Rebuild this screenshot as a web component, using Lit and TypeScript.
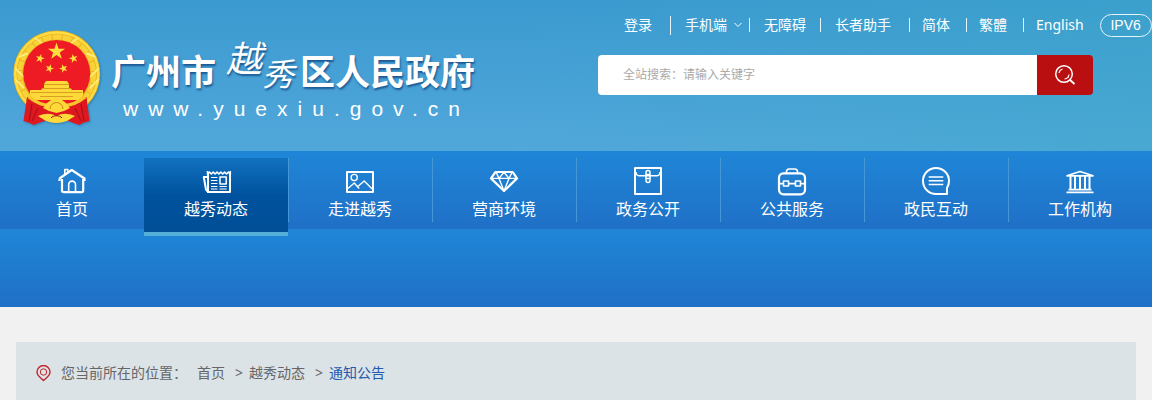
import { LitElement, html, css, svg } from "lit";
import { customElement, state } from "lit/decorators.js";
import { classMap } from "lit/directives/class-map.js";

const icons: Record<string, unknown> = {
  home: svg`<path d="M3.5 13.5 15.7 5 28.5 13.5V16M3.5 13.5V16M6 14V25.5a1.6 1.6 0 0 0 1.6 1.6H25.6a1.6 1.6 0 0 0 1.6-1.6V14" stroke-width="2.2"/><path d="M8.8 9.5V4.5h3v3" stroke-width="1.6"/><path d="M12.7 27V19.5a3.4 3.4 0 0 1 6.8 0V27" stroke-width="1.6"/>`,
  news: svg`<path d="M8 27V7.5M30 7.5V27H7" stroke-width="2"/><path d="M7.5 6v3l1.9-2 1.9 2 1.9-2 1.9 2 1.9-2 1.9 2 1.9-2 1.9 2 1.9-2 1.9 2 1.9-2 1.9 2V6" stroke-width="1.6"/><path d="M7.5 12H3.8l2.2 12.5 1.5 2" stroke-width="2"/><path d="M11 12.5h6.4M11 15.5h6.4M11 18.5h6.4M11 21.5h6.4M11 24h6.4M19.5 21.5h7.2M19.5 24h7.2" stroke-width="1.2"/><path d="M20 12h6.2v7H20z" stroke-width="1.5"/>`,
  picture: svg`<path d="M3 7h26v20H3z" stroke-width="2"/><circle cx="10.2" cy="12.5" r="3.1" stroke-width="1.4"/><path d="M4 23.5 10.2 18l5 5.5M13.2 22l7-6 8 8" stroke-width="1.4"/>`,
  diamond: svg`<path d="M7.5 7h17.2l4.3 6.4L16 26 3 13.4z" stroke-width="2.2"/><path d="M3 13.4h26M8 7l3 6.4L16 26l5-12.6L24.3 7M11 13.4 16 7.2l5 6.2" stroke-width="1.4"/>`,
  archive: svg`<path d="M3 3h26v26H3z" stroke-width="2"/><path d="M4 7c0 2.4 1 3.7 3 3.7h18c2 0 3-1.3 3-3.7" stroke-width="1.4"/><rect x="14" y="5.5" width="4" height="12" rx="2" stroke-width="1.5"/><path d="M14 9.5h4M14 13.5h4" stroke-width="1.5"/>`,
  bag: svg`<rect x="3" y="8.3" width="26" height="21" rx="4.5" stroke-width="2.2"/><path d="M10.5 8V6.5A2.6 2.6 0 0 1 13 4h6a2.6 2.6 0 0 1 2.5 2.5V8" stroke-width="1.6"/><path d="M3 18.6h4.5M12.5 18.6h7M24.5 18.6H29M7.5 16h5v5h-5zM19.5 16h5v5h-5z" stroke-width="1.6"/>`,
  chat: svg`<path d="M27 22.9V29H16A13 13 0 1 1 29 16c0 2.8-.7 5-2 6.9z" stroke-width="2"/><path d="M8.7 12h14.6M8.7 15.8h14.6M8.7 19.5h14.6" stroke-width="1.4"/>`,
  hall: svg`<path d="M3 10.8h26L16 6.5z" stroke-width="1.7"/><path d="M6.5 11v13.5M11 11v13.5M16 11v13.5M21 11v13.5M25.5 11v13.5" stroke-width="2"/><path d="M4.5 24.6h23M2.5 27.4h27" stroke-width="1.7"/>`,
};

const navItems = [
  { icon: "home", label: "首页" },
  { icon: "news", label: "越秀动态" },
  { icon: "picture", label: "走进越秀" },
  { icon: "diamond", label: "营商环境" },
  { icon: "archive", label: "政务公开" },
  { icon: "bag", label: "公共服务" },
  { icon: "chat", label: "政民互动" },
  { icon: "hall", label: "工作机构" },
];

const star = (cx: number, cy: number, r: number, turn = 0) => {
  const points = Array.from({ length: 10 }, (_, i) => {
    const a = ((-90 + turn + i * 36) * Math.PI) / 180;
    const d = i % 2 ? r * 0.39 : r;
    return `${(cx + d * Math.cos(a)).toFixed(2)},${(cy + d * Math.sin(a)).toFixed(2)}`;
  });
  return svg`<polygon points=${points.join(" ")} fill="#ffdf3d"/>`;
};

@customElement("site-emblem")
export class SiteEmblem extends LitElement {
  static styles = css`
    :host { display: block; flex: none; }
    svg { display: block; filter: drop-shadow(1px 1px 1px rgba(10, 60, 110, 0.35)); }
  `;
  render() {
    return html`<svg width="88" height="96" viewBox="0 0 88 96" aria-hidden="true">
      <ellipse cx="43.7" cy="44" rx="43.5" ry="43.5" fill="#e6b422"/>
      <circle cx="43.7" cy="44" r="41.5" fill="none" stroke="#ffdc42" stroke-width="2.5"/>
      <circle cx="43.7" cy="44" r="37" fill="none" stroke="#f9d238" stroke-width="5" stroke-dasharray="9 1"/>
      <path d="M2 38 12 48M2 49l9 9M86 38l-10 10M86 49l-9 9M22 8l7 5M65 8l-7 5M6 27l9-4M82 27l-9-4" stroke="#fff08a" stroke-width="1.5"/>
      <ellipse cx="43.7" cy="43.5" rx="33.5" ry="33.5" fill="#ee1b24"/>
      ${star(43.5, 21.5, 9)}${star(27, 28.5, 4.7, 15)}${star(60.5, 28.5, 4.7, -15)}${star(36.5, 38.5, 4.5, 20)}${star(50.5, 38.5, 4.5, -20)}
      <path d="M33 51h21l2 3v4h2l1 3H28l1-3h2v-4z" fill="#ffd83a"/>
      <path d="M17 60h53v5l-3 5H20l-3-5z" fill="#ffd83a"/>
      <path d="M31 54.5h25M29 58.5h29M18 62.5h51M27 66.5h33" stroke="#c8871a" stroke-width=".7"/>
      <path d="M14 67c10 6 19 8 29.5 6 10.5 2 20 0 30-6l3 24-7 2-3 2-6-2-5-2-12-2-12 2-6 2-5 2-4-2-6-2z" fill="#df1820"/>
      <path d="M16 67c10 8 18 10 27.5 7.5C53 77 62 75 72 67" fill="none" stroke="#f7c62d" stroke-width="3.5"/>
      <path d="M30 78c2-2 4-6 7-7l2-3 2 2 2.500-3 2.500 3 2-2 2 3c3 1 5 5 7 7l-6 3-7.500 2L36 81z" fill="#ffd83a"/>
      <path d="M37 79a6.5 6.5 0 0 1 13 0" fill="none" stroke="#c8871a" stroke-width="1"/>
      <path d="M25 86c8-3 12-3 18.5 0 6.5-3 10.5-3 18.5 0-5 3-9 7-18.5 7S30 89 25 86z" fill="#ffd83a"/>
      <path d="M38 88c2-3 9-3 11 0M19 74l-3 17M25 78l-6 13M68 74l3 17M62 78l6 13" fill="none" stroke="#9e1018" stroke-width="1"/>
    </svg>`;
  }
}

@customElement("app-root")
export class AppRoot extends LitElement {
  @state() private active = 1;

  static styles = css`
    :host {
      display: flex;
      flex-direction: column;
      min-height: 100vh;
      background: #f1f1f1;
      font: 14px/20px "Noto Sans", "Noto Sans CJK SC", sans-serif;
      color: #666;
    }
    * { box-sizing: border-box; }
    a { color: inherit; text-decoration: none; }

    .header {
      display: flex;
      justify-content: space-between;
      min-height: 151px;
      color: #fff;
      background:
        linear-gradient(100deg, transparent 45%, rgba(58, 172, 196, 0.35)),
        linear-gradient(#3b9ad0, #51a7da);
    }
    .logo { display: flex; gap: 10px; padding: 30px 0 0 13px; }
    .wordmark { display: flex; flex-direction: column; padding-top: 10px; }
    .name {
      display: flex;
      height: 58px;
      margin: 0;
      font: bold 35px/60px "Noto Sans CJK SC", sans-serif;
      text-shadow: 1px 2px 2px rgba(10, 60, 120, 0.7);
    }
    .brush { display: flex; padding: 0 6px 0 10px; font-weight: 400; font-style: italic; }
    .brush-first { font-size: 36px; line-height: 32px; }
    .brush-last { font-size: 32px; line-height: 64px; }
    .address {
      padding-left: 12px;
      font: 21px/22px "Liberation Sans", sans-serif;
      letter-spacing: 10px;
    }

    .tools { width: 554px; padding-top: 14px; }
    .links { display: flex; align-items: center; height: 22px; padding-left: 26px; white-space: nowrap; }
    .links a { display: flex; align-items: center; gap: 7px; padding: 0 14px; }
    .links .first { padding: 0 18px 0 0; }
    .links .menu { padding-right: 7px; }
    .links .wide { padding-right: 18px; }
    .links .lang { padding: 0 16px 0 12px; }
    .rule { flex: none; width: 1px; height: 14px; background: #e6f4fb; }
    .rule.tall { height: 19px; }
    .links .pill {
      justify-content: center;
      width: 52px;
      height: 23px;
      padding: 0;
      border: 1px solid #e6f4fb;
      border-radius: 12px;
      font-family: "Liberation Sans", sans-serif;
    }
    .search { display: flex; width: 495px; height: 40px; margin-top: 19px; border-radius: 4px; overflow: hidden; }
    .search input {
      flex: 1;
      min-width: 0;
      padding: 0 25px;
      border: 0;
      outline: 0;
      background: #fff;
      font: 12px/20px "Noto Sans", "Noto Sans CJK SC", sans-serif;
      color: #333;
    }
    .search input::placeholder { color: #aaa; }
    .search button {
      display: grid;
      place-items: center;
      width: 56px;
      padding: 0;
      border: 0;
      background: #ba0f10;
    }

    .nav {
      display: grid;
      grid-template-columns: repeat(8, 1fr);
      align-items: start;
      height: 78px;
      padding-top: 7px;
      background: linear-gradient(#1f86d7, #1f70c6);
    }
    .nav a {
      position: relative;
      display: flex;
      flex-direction: column;
      align-items: center;
      height: 64px;
      padding-top: 7px;
      color: #fff;
      font-size: 16px;
      line-height: 24px;
    }
    .nav a + a { box-shadow: inset 1px 0 #4597d6; }
    .nav a.active {
      height: 78px;
      border-bottom: 4px solid #53afd6;
      background: linear-gradient(#1272c0, #00529e 50%, #004f97);
      box-shadow: none;
    }
    .icon { display: block; fill: none; stroke: #fff; stroke-linejoin: round; }
    .subnav { height: 78px; background: linear-gradient(#1f86d7, #1f70c6); }

    .content { flex: 1; display: flex; padding: 35px 16px 0; }
    .crumbs {
      flex: 1;
      display: flex;
      align-items: flex-start;
      padding: 21px 20px 0;
      background: #dbe3e6;
      white-space: nowrap;
    }
    .crumbs svg { margin: 2px 10px 0 0; }
    .crumbs ol { display: flex; margin: 0; padding: 0 0 0 10px; list-style: none; }
    .crumbs li + li::before { content: ">"; padding: 0 6px 0 10px; }
    .crumbs .current { color: #2459b0; }
  `;

  render() {
    return html`
      <header class="header">
        <div class="logo">
          <site-emblem></site-emblem>
          <div class="wordmark">
            <h1 class="name">
              <span>广州市</span>
              <span class="brush"><span class="brush-first">越</span><span class="brush-last">秀</span></span>
              <span>区人民政府</span>
            </h1>
            <span class="address">www.yuexiu.gov.cn</span>
          </div>
        </div>
        <div class="tools">
          <div class="links">
            <a class="first" href="#">登录</a><i class="rule tall"></i>
            <a class="menu" href="#">手机端
              <svg width="8" height="6" viewBox="0 0 8 6" fill="none" stroke="#fff" aria-hidden="true"><path d="M.5 1 4 4.5 7.5 1"/></svg></a><i class="rule"></i>
            <a href="#">无障碍</a><i class="rule"></i>
            <a class="wide" href="#">长者助手</a><i class="rule"></i>
            <a class="lang" href="#">简体</a><i class="rule"></i>
            <a class="lang" href="#">繁體</a><i class="rule"></i>
            <a class="lang" href="#">English</a>
            <a class="pill" href="#">IPV6</a>
          </div>
          <form class="search" role="search" @submit=${(e: Event) => e.preventDefault()}>
            <input type="text" aria-label="全站搜索" placeholder="全站搜索：请输入关键字" />
            <button type="submit" aria-label="搜索">
              <svg width="22" height="22" viewBox="0 0 22 22" fill="none" stroke="#fff" aria-hidden="true">
                <circle cx="10" cy="10" r="8.3" stroke-width="1.5"/>
                <path d="M15.5 15.5l5 4.5" stroke-width="1.8"/>
                <path d="M5 9a5 5 0 0 1 3.5-4M15 10.5a5 5 0 0 1-4.5 4.5" stroke-width="1.2"/>
              </svg>
            </button>
          </form>
        </div>
      </header>
      <nav class="nav">
        ${navItems.map(
          (item, i) => html`<a href="#" class=${classMap({ active: i === this.active })} @click=${() => (this.active = i)}>
            <svg class="icon" width="32" height="32" viewBox="0 0 32 32" aria-hidden="true">${icons[item.icon]}</svg>
            <span>${item.label}</span>
          </a>`
        )}
      </nav>
      <div class="subnav"></div>
      <main class="content">
        <nav class="crumbs">
          <svg width="15" height="17" viewBox="0 0 15 17" fill="none" stroke="#c3262b" aria-hidden="true">
            <path d="M7.5 15.5C5 13 1 11 1 7a6.3 6.3 0 0 1 13 0c0 4-4 6-6.5 8.5z" stroke-width="1.4"/>
            <circle cx="7.5" cy="7" r="3.2"/>
          </svg>
          <span>您当前所在的位置：</span>
          <ol>
            <li><a href="#">首页</a></li>
            <li><a href="#">越秀动态</a></li>
            <li><a class="current" href="#" aria-current="page">通知公告</a></li>
          </ol>
        </nav>
      </main>
    `;
  }
}
